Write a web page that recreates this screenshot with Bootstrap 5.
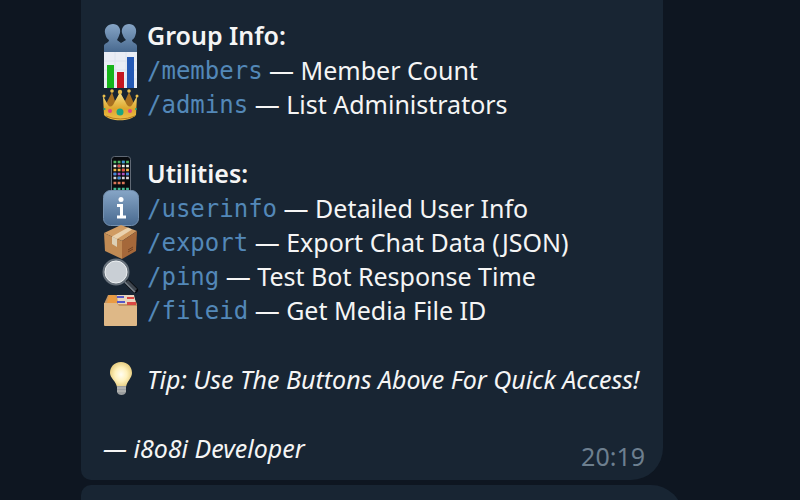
<!DOCTYPE html>
<html lang="en">
<head>
<meta charset="utf-8">
<meta name="viewport" content="width=device-width, initial-scale=1">
<title>Bot help</title>
<link href="https://cdn.jsdelivr.net/npm/bootstrap@5.3.0/dist/css/bootstrap.min.css" rel="stylesheet">
<style>
body{background:#0e1621;color:#f5f5f5;font-family:"Noto Sans",sans-serif;font-size:25px;line-height:34px}
.chat{padding:0 117px 0 81px;gap:5px}
.bubble{background:#182533;max-width:582px;padding:18px 18px 7px 22px;border-radius:0 0 32px 10px}
.next-bubble{background:#182533;max-width:602px;min-height:64px;border-radius:10px 32px 0 0}
.groups{gap:35px}
.line{min-height:34px;white-space:pre}
.heading{font-size:25px;font-weight:600;line-height:34px;min-height:35px;padding-bottom:2px}
.emoji{width:36px;height:36px;flex:none;margin:0 8px 0 0;overflow:visible}
.line{height:34px}
.heading{height:35px}
.cmd{font-family:"DejaVu Sans Mono",monospace;font-size:24px;color:#5388b8;text-decoration:none;padding-top:2px}
.signature{padding-bottom:8px}
.stamp{color:#6d7f8f}
</style>
<script src="https://cdn.jsdelivr.net/npm/bootstrap@5.3.0/dist/js/bootstrap.bundle.min.js"></script>
</head>
<body>
<main class="chat d-flex flex-column vh-100 overflow-hidden">
<article class="bubble flex-shrink-0">
<div class="groups d-flex flex-column">
<section>
<h2 class="heading d-flex align-items-center m-0"><svg class="emoji" viewBox="0 0 36 36" aria-hidden="true"><defs><linearGradient id="blue" x2="0" y2="1"><stop stop-color="#86a5c6"/><stop offset="1" stop-color="#48698f"/></linearGradient></defs><path fill="url(#blue)" d="M10 7c5 0 8 4 7 9-1 3-2 5-3 7l4 3 5-3c-2-2-3-4-4-7-1-5 2-9 7-9s8 4 7 9c-1 4-2 6-4 7 0 3 5 3 5 6v6H1v-6c0-3 5-3 5-6-2-1-3-3-4-7-1-5 3-9 8-9Z"/></svg>Group Info:</h2>
<div class="line d-flex align-items-center"><svg class="emoji" viewBox="0 0 36 36" aria-hidden="true"><path fill="#e9edf5" d="M1 0h33v36H1z"/><path stroke="#dce3ee" d="M1 9h33M1 18h33M1 27h33M12 0v36M23 0v36"/><path fill="#16b51a" d="M4 13h7v23H4z"/><path fill="#c51620" d="M14 20h7v16h-7z"/><path fill="#2459b5" d="M24 5h7v31h-7z"/></svg><a class="cmd" href="#members">/members</a> — Member Count</div>
<div class="line d-flex align-items-center"><svg class="emoji" viewBox="0 0 36 36" aria-hidden="true"><defs><linearGradient id="gold" x2="0" y2="1"><stop stop-color="#fbe58a"/><stop offset=".6" stop-color="#dca52c"/><stop offset="1" stop-color="#f0c24b"/></linearGradient></defs><path fill="#a87020" d="m9 6 3 9 5-7 5 7 4-9 6 14-3 8H5L2 20Z"/><path fill="url(#gold)" d="m0 10 5 9q2 3 5 0l7-13 7 13q3 3 5 0l5-9-1 19c-6 7-26 7-32 0Z"/><g fill="#e8bd4b"><circle cx="1" cy="10" r="1.5"/><circle cx="9" cy="5" r="1.8"/><circle cx="17" cy="6" r="2.2"/><circle cx="26" cy="5" r="1.8"/><circle cx="34" cy="10" r="1.5"/></g><path fill="none" stroke="#b77b1f" d="M3 30q14 6 29 0"/><ellipse cx="17" cy="26" rx="3.5" ry="3.5" fill="#1aa583"/><g fill="#df4382"><circle cx="7" cy="25" r="2"/><circle cx="27" cy="25" r="2"/></g><g fill="#1aa583"><circle cx="1.5" cy="23" r="1"/><circle cx="33" cy="23" r="1"/></g></svg><a class="cmd" href="#admins">/admins</a> — List Administrators</div>
</section>
<section>
<h2 class="heading d-flex align-items-center m-0"><svg class="emoji" viewBox="0 0 36 36" aria-hidden="true"><rect x="8.5" y="1.5" width="19" height="40" rx="3" fill="#080b0f" stroke="#606975"/><g fill="none" stroke-width="2.5" stroke-dasharray="2.8 1.4"><path stroke="#54b965" d="M10.5 7h15.4"/><path stroke="#efefe7" d="M10.5 11h15.4"/><path stroke="#f0b84b" d="M10.5 15h15.4"/><path stroke="#ac50bb" d="M10.5 19h15.4"/><path stroke="#d5d6da" d="M10.5 23h15.4"/><path stroke="#dc7758" d="M10.5 28h11.2"/><path stroke="#43b993" d="M10.5 34h15.4"/></g><path fill="#e2534d" d="M14.7 9.8h2.8v2.5h-2.8zM18.9 13.8h2.8v2.5h-2.8z"/><path fill="#3d8ed7" d="M18.9 5.8h2.8v2.5h-2.8zM10.5 17.8h2.8v2.5h-2.8zM14.7 21.8h2.8v2.5h-2.8zM23.1 17.8h2.8v2.5h-2.8z"/></svg>Utilities:</h2>
<div class="line d-flex align-items-center"><svg class="emoji" viewBox="0 0 36 36" aria-hidden="true"><rect x=".5" y=".5" width="35" height="35" rx="7" fill="url(#blue)" stroke="#7591b0"/><circle cx="18" cy="9.5" r="2.5" fill="#fff"/><path fill="none" stroke="#fff" stroke-width="3" d="M14 15.5h4.500V27M14 27h9"/></svg><a class="cmd" href="#userinfo">/userinfo</a> — Detailed User Info</div>
<div class="line d-flex align-items-center"><svg class="emoji" viewBox="0 0 36 36" aria-hidden="true"><path fill="#d09b62" d="M1 9 18 1l16 6-15 10Z"/><path fill="#c18b54" d="m1 9 18 8v18L2 27Z"/><path fill="#a5683a" d="M34 7 19 17v18l14-8Z"/><path fill="#ead2ae" d="m9 12.500 16-9 4 2-15 9.500Z"/><path fill="#ddd0b6" d="m9 12.500 5 2.500v8l-5-3Z"/><path stroke="#744222" d="m25 26 5-3m-5 5 5-3"/></svg><a class="cmd" href="#export">/export</a> — Export Chat Data (JSON)</div>
<div class="line d-flex align-items-center"><svg class="emoji" viewBox="0 0 36 36" aria-hidden="true"><path stroke="#05080c" stroke-linecap="round" stroke-width="6" d="m25 25 7 7"/><path stroke="#747d86" stroke-width="2" d="m22 24 10 10"/><path stroke="#3d444d" stroke-width="3" d="m24 23 9 9"/><circle cx="13" cy="14" r="12" fill="#b6bec6" stroke="#68727c" stroke-width="3"/><circle cx="13" cy="14" r="11" fill="#c9cfd5" stroke="#edf0f2"/></svg><a class="cmd" href="#ping">/ping</a> — Test Bot Response Time</div>
<div class="line d-flex align-items-center"><svg class="emoji" viewBox="0 0 36 36" aria-hidden="true"><path fill="#c69763" d="m1 12 4-9h25l4 9v20H1z"/><path fill="#e99b43" d="m4 11 2-8h6l3 8z"/><path fill="#e8d5c0" d="M14 3h17l2 9H15z"/><path fill="#5558c8" d="M14 4h7v2h-7zm0 5h8v2h-8z"/><path fill="#d94743" d="M24 5h7v2h-7zm0 5h9v3h-9z"/><path fill="#deb887" d="M1 11h13l2 3h18v19q0 1-1 1H2q-1 0-1-1Z"/></svg><a class="cmd" href="#fileid">/fileid</a> — Get Media File ID</div>
</section>
<p class="line fst-italic d-flex align-items-center m-0"><svg class="emoji" viewBox="0 0 36 36" aria-hidden="true"><defs><radialGradient id="glow"><stop stop-color="#fffdf2"/><stop offset=".55" stop-color="#fff1bb"/><stop offset="1" stop-color="#e8cf83"/></radialGradient></defs><path fill="url(#glow)" d="M18 1c7 0 11 5 11 11 0 5-5 8-6 14H14c-1-6-7-9-7-14C7 6 11 1 18 1Z"/><path fill="#9b9e9f" d="M14 25h9v6q-1 3-4.500 3T14 31Z"/><path stroke="#c1c1bc" d="M14 27h9m-9 3h9"/></svg>Tip: Use The Buttons Above For Quick Access!</p>
<footer class="d-flex justify-content-between align-items-end"><em class="signature">— i8o8i Developer</em><time class="stamp" datetime="20:19">20:19</time></footer>
</div>
</article>
<article class="next-bubble flex-shrink-0" aria-label="Next message"></article>
</main>
</body>
</html>
